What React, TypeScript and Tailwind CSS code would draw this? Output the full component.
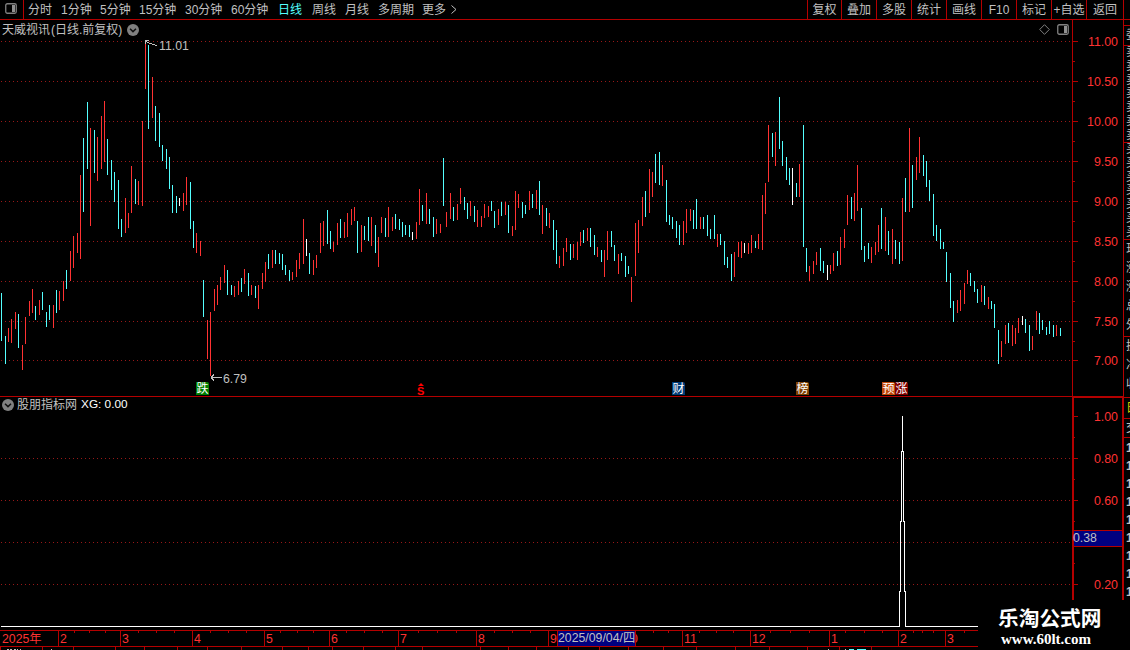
import clsx from "clsx"

type Bar = [x: number, top: number, bottom: number]

const UP: Bar[] = [
	[8, 328, 342], [11, 319, 343], [15, 312, 329], [22, 345, 370], [25, 317, 344], [29, 301, 316], [32, 289, 313],
	[39, 300, 315], [53, 305, 328], [59, 291, 310], [63, 281, 301], [70, 251, 281], [73, 236, 268], [77, 233, 253],
	[80, 175, 259], [90, 128, 226], [97, 137, 181], [101, 116, 169], [104, 101, 162], [125, 198, 233], [128, 213, 228],
	[131, 166, 213], [138, 181, 205], [142, 121, 206], [145, 41, 89], [152, 77, 118], [183, 193, 211], [186, 177, 205],
	[196, 233, 253], [200, 241, 256], [207, 320, 359], [210, 312, 376], [214, 289, 311], [217, 285, 305], [220, 277, 290],
	[224, 265, 283], [234, 286, 297], [238, 281, 295], [244, 269, 284], [251, 285, 295], [258, 285, 309], [262, 273, 289],
	[265, 262, 282], [272, 250, 268], [292, 272, 280], [296, 260, 277], [299, 253, 269], [303, 219, 264], [313, 260, 275],
	[316, 255, 268], [320, 223, 253], [323, 221, 246], [333, 242, 252], [337, 223, 245], [344, 222, 238], [347, 213, 237],
	[351, 209, 225], [354, 207, 221], [361, 225, 252], [371, 217, 246], [378, 237, 267], [381, 217, 233], [388, 207, 237],
	[392, 217, 231], [416, 222, 239], [419, 189, 225], [426, 193, 224], [436, 219, 234], [440, 224, 233], [446, 212, 227],
	[450, 193, 219], [457, 204, 220], [460, 188, 204], [470, 201, 216], [477, 210, 227], [481, 216, 227], [484, 204, 218],
	[488, 206, 217], [498, 209, 225], [505, 202, 215], [512, 226, 236], [515, 191, 230], [518, 194, 208], [529, 191, 210],
	[536, 190, 209], [542, 205, 234], [549, 213, 228], [559, 256, 268], [563, 248, 266], [566, 238, 252], [573, 244, 258],
	[577, 242, 260], [580, 232, 246], [587, 228, 241], [597, 247, 257], [604, 250, 277], [607, 231, 260], [618, 254, 274],
	[631, 277, 302], [635, 223, 276], [638, 220, 253], [642, 197, 226], [649, 169, 213], [652, 172, 197], [662, 165, 186],
	[683, 221, 245], [686, 209, 233], [690, 209, 221], [700, 217, 229], [717, 234, 247], [734, 252, 277], [738, 242, 257],
	[741, 241, 258], [748, 243, 254], [751, 235, 253], [758, 234, 249], [762, 195, 250], [765, 183, 214], [768, 125, 182],
	[775, 132, 166], [799, 164, 197], [809, 266, 281], [813, 261, 274], [816, 252, 265], [830, 265, 274], [833, 253, 271],
	[840, 237, 265], [844, 229, 248], [847, 195, 225], [854, 193, 221], [857, 165, 211], [871, 247, 263], [875, 242, 255],
	[878, 225, 252], [885, 217, 251], [892, 229, 264], [902, 198, 261], [909, 128, 212], [916, 157, 180], [919, 137, 173],
	[957, 300, 313], [960, 290, 311], [964, 283, 304], [967, 270, 284], [981, 285, 302], [988, 297, 309], [1001, 341, 357],
	[1005, 325, 344], [1012, 325, 346], [1015, 328, 344], [1018, 318, 333], [1032, 336, 350], [1036, 311, 330],
	[1056, 325, 336],
]

const DOWN: Bar[] = [
	[1, 293, 341], [5, 336, 364], [18, 314, 348], [35, 306, 320], [42, 292, 310], [46, 312, 327], [49, 305, 320],
	[56, 290, 313], [66, 270, 289], [83, 138, 212], [87, 102, 169], [94, 130, 173], [107, 139, 175], [111, 160, 190],
	[114, 172, 202], [118, 180, 229], [121, 219, 237], [135, 179, 204], [148, 45, 129], [155, 106, 141], [159, 113, 147],
	[162, 145, 161], [166, 149, 169], [169, 157, 189], [172, 185, 213], [176, 196, 213], [190, 182, 229], [193, 221, 248],
	[203, 280, 317], [227, 270, 295], [231, 285, 295], [241, 278, 292], [248, 273, 296], [255, 286, 298], [268, 254, 269],
	[275, 250, 264], [279, 253, 264], [282, 254, 270], [285, 265, 275], [289, 270, 281], [309, 253, 274], [327, 210, 244],
	[330, 231, 249], [340, 219, 238], [357, 221, 253], [364, 226, 240], [368, 217, 241], [375, 225, 253], [385, 218, 237],
	[395, 214, 229], [399, 219, 230], [402, 222, 237], [405, 225, 235], [409, 225, 237], [422, 205, 221], [429, 209, 224],
	[433, 217, 237], [443, 158, 206], [453, 207, 221], [464, 197, 210], [467, 203, 219], [474, 206, 222], [491, 201, 211],
	[494, 211, 228], [501, 202, 216], [508, 205, 233], [522, 202, 218], [525, 205, 214], [532, 194, 208], [539, 181, 215],
	[546, 208, 226], [553, 220, 250], [556, 230, 264], [570, 244, 260], [583, 230, 243], [590, 228, 247], [594, 235, 255],
	[601, 250, 262], [611, 231, 247], [614, 245, 261], [621, 253, 261], [625, 256, 277], [628, 266, 274], [645, 191, 217],
	[655, 154, 183], [659, 152, 185], [666, 180, 222], [669, 215, 225], [672, 217, 229], [676, 221, 238], [679, 225, 245],
	[693, 210, 229], [696, 199, 229], [703, 217, 229], [707, 215, 236], [710, 229, 239], [714, 215, 239], [720, 234, 245],
	[724, 241, 265], [727, 257, 268], [731, 254, 281], [755, 241, 248], [772, 133, 157], [779, 97, 149], [782, 141, 166],
	[786, 157, 180], [789, 168, 185], [796, 183, 197], [803, 125, 247], [806, 248, 272], [820, 248, 271], [823, 261, 273],
	[837, 251, 266], [851, 197, 219], [861, 208, 250], [864, 246, 262], [868, 243, 259], [881, 208, 249], [888, 231, 255],
	[895, 240, 259], [899, 242, 264], [905, 178, 212], [912, 165, 208], [923, 155, 176], [926, 161, 187], [929, 180, 201],
	[933, 194, 236], [936, 225, 241], [940, 229, 249], [943, 242, 249], [946, 252, 282], [950, 273, 308], [953, 301, 322],
	[970, 273, 286], [974, 281, 292], [977, 289, 303], [984, 286, 305], [991, 301, 309], [994, 304, 328], [998, 330, 364],
	[1008, 323, 343], [1025, 319, 333], [1029, 325, 351], [1039, 313, 334], [1042, 320, 330], [1046, 327, 335],
	[1049, 321, 334], [1053, 325, 337], [1060, 328, 336],
]

const FLAT: Bar[] = [
	[179, 198, 206], [306, 239, 256], [412, 232, 240], [744, 243, 253], [792, 168, 205], [827, 265, 280], [1022, 316, 325],
]

const PERIODS = [
	{ name: "分时", width: "w-[33px]" },
	{ name: "1分钟", width: "w-[39px]" },
	{ name: "5分钟", width: "w-[39px]" },
	{ name: "15分钟", width: "w-[46px]" },
	{ name: "30分钟", width: "w-[46px]" },
	{ name: "60分钟", width: "w-[47px]" },
	{ name: "日线", width: "w-[34px]", active: true },
	{ name: "周线", width: "w-[33px]" },
	{ name: "月线", width: "w-[33px]" },
	{ name: "多周期", width: "w-[44px]" },
	{ name: "更多", width: "w-[29px]" },
]

const TOOLS = ["复权", "叠加", "多股", "统计", "画线", "F10", "标记", "+自选", "返回"]

const PRICES = ["11.00", "10.50", "10.00", "9.50", "9.00", "8.50", "8.00", "7.50", "7.00"]

const MONTHS = [
	{ name: "2025年", width: "w-[58px]" },
	{ name: "2", width: "w-[62px]" },
	{ name: "3", width: "w-[72px]" },
	{ name: "4", width: "w-[72px]" },
	{ name: "5", width: "w-[65px]" },
	{ name: "6", width: "w-[69px]" },
	{ name: "7", width: "w-[78px]" },
	{ name: "8", width: "w-[72px]" },
	{ name: "9", width: "w-[81px]" },
	{ name: "0", width: "w-[53px]" },
	{ name: "11", width: "w-[68px]" },
	{ name: "12", width: "w-[79px]" },
	{ name: "1", width: "w-[69px]" },
	{ name: "2", width: "w-[47px]" },
	{ name: "3", width: "w-[33px]" },
]

const WEEK_TICKS = [
	74, 89, 105, 138, 156, 174, 210, 228, 246, 280, 297, 313, 346, 364, 382, 418, 437, 456, 494, 512, 530, 653, 668, 699,
	716, 733, 770, 790, 809, 845, 864, 882, 913, 922, 933, 964,
]

const FOOT_TICKS = [
	0, 42, 73, 115, 144, 177, 207, 241, 282, 308, 332, 363, 395, 422, 480, 508, 536, 568, 599, 628, 663, 696, 735, 769,
	807, 839, 871,
]

const BADGES = [
	{ name: "跌", style: "left-[196px] bg-[#008000]" },
	{ name: "财", style: "left-[672px] bg-[#003c78]" },
	{ name: "榜", style: "left-[796px] bg-[#804000]" },
	{ name: "预", style: "left-[882px] bg-[#c04808]" },
	{ name: "涨", style: "left-[895px] bg-[#800000]" },
]

// quote panel that runs past the right edge of the window
const QUOTE_ROWS = [
	{ labels: ["委"], style: "h-5 leading-[18px]" },
	{ labels: ["卖", "卖", "卖", "卖", "卖", "卖", "卖"], style: "h-[97px] leading-[13.8px]" },
	{ labels: ["买", "买", "买", "买", "买", "买", "买"], style: "h-[97px] leading-[13.8px]" },
	{ labels: ["现", "涨", "涨", "总", "外"], style: "h-[97px] leading-[19px]" },
	{ labels: ["换", "净", "收"], style: "h-[61px] leading-[19px]" },
	{ labels: ["日"], style: "h-[21px] leading-5 text-[#d0d000]" },
	{ labels: ["交"], style: "h-[19px] leading-[18px]" },
]

function Bars({ data, color }: { data: Bar[]; color: string }) {
	return (
		<g fill={color}>
			{data.map(([x, top, bottom]) => (
				<rect key={x} x={x} y={top} width="1" height={bottom - top} />
			))}
		</g>
	)
}

function DottedLine({ y }: { y: number }) {
	return <line x1="1" x2="1071" y1={y + 0.5} y2={y + 0.5} stroke="#981818" strokeDasharray="1 3" />
}

function CollapseIcon() {
	return (
		<svg className="h-3 w-3 flex-none" viewBox="0 0 12 12">
			<circle cx="6" cy="6" r="6" fill="#808080" />
			<path d="M3 4.8 6 7.6 9 4.8" fill="none" stroke="#101010" strokeWidth="1.5" />
		</svg>
	)
}

function PanelIcon() {
	return (
		<svg className="h-[11px] w-3 flex-none" viewBox="0 0 12 11">
			<rect x=".75" y=".75" width="10.5" height="9.5" rx="1.5" fill="none" stroke="#808080" strokeWidth="1.3" />
			<rect x="7" y="2" width="3" height="7" fill="#909090" />
		</svg>
	)
}

function Toolbar() {
	return (
		<div className="flex h-5 flex-none border-b border-[#b40000]">
			<div className="flex w-6 flex-none items-start border-r border-[#b40000] pt-[3px] pl-[5px]">
				<PanelIcon />
			</div>
			<div className="flex w-[783px] flex-none items-center pl-1">
				{PERIODS.map((period) => (
					<span key={period.name} className={clsx("flex-none", period.width, period.active && "text-[#54ffff]")}>
						{period.name}
					</span>
				))}
				<svg className="h-[9px] w-[6px]" viewBox="0 0 6 9">
					<path d="M.5.5 5 4.5.5 8.5" fill="none" stroke="#c0c0c0" />
				</svg>
			</div>
			{TOOLS.map((tool, i) => (
				<div
					key={tool}
					className={clsx(
						"flex flex-none items-center justify-center border-l border-[#b40000]",
						i === 0 ? "w-[34px]" : i === 8 ? "w-[37px]" : "w-[35px]",
					)}
				>
					{tool}
				</div>
			))}
			<div className="flex-1 border-l border-[#b40000]" />
		</div>
	)
}

function PriceChart() {
	return (
		<div className="relative h-[376px] w-[1072px] flex-none">
			<svg className="block h-[376px] w-[1072px]" viewBox="0 20 1072 376" shapeRendering="crispEdges">
				{[41, 81, 121, 161, 201, 241, 281, 321, 360].map((y) => (
					<DottedLine key={y} y={y} />
				))}
				<Bars data={UP} color="#ff3232" />
				<Bars data={DOWN} color="#54ffff" />
				<Bars data={FLAT} color="#ffffff" />
				<path
					d="M145.5 44V40.5H149M146 41.5 150 43.5 157 45.5M210.5 377.5H222M211 377.5 214 374.5M211 377.5 214 380.5"
					fill="none"
					stroke="#c0c0c0"
				/>
			</svg>
			<div className="absolute inset-x-0 top-0 flex h-[19px] items-center justify-between pr-[3px] pl-[2px]">
				<div className="flex items-center gap-[5px]">
					<span>
						天威视讯<span className="pl-px">(</span>日线.前复权<span>)</span>
					</span>
					<CollapseIcon />
				</div>
				<div className="flex items-center gap-[7px]">
					<svg className="h-[11px] w-[11px]" viewBox="0 0 11 11">
						<path d="M5.5.7 10.3 5.5 5.5 10.3.7 5.5Z" fill="none" stroke="#808080" />
					</svg>
					<PanelIcon />
				</div>
			</div>
			<span className="absolute top-[18px] left-[159px] text-[12.3px] leading-4">11.01</span>
			<span className="absolute top-[351px] left-[223px] text-[12.3px] leading-4">6.79</span>
			{BADGES.map((badge) => (
				<span
					key={badge.name}
					className={clsx(
						"absolute top-[362px] flex h-[13px] w-[13px] items-center justify-center rounded-tr-[2px] text-[12px] leading-none text-white",
						badge.style,
					)}
				>
					{badge.name}
				</span>
			))}
			<span className="absolute top-[365px] left-[417px] text-[11px] leading-3 font-bold text-[#ff0000]">S</span>
			<svg className="absolute top-[363px] left-[418px] h-[3px] w-[6px]" viewBox="0 0 6 3">
				<path d="M0 3 3 0 6 3Z" fill="#ff0000" />
			</svg>
		</div>
	)
}

function PriceAxis() {
	return (
		<div className="flex h-[376px] w-[51px] flex-none border-l border-[#b40000] text-[#ff3232]">
			<svg className="h-[376px] w-[6px] flex-none" viewBox="1073 20 6 376" shapeRendering="crispEdges">
				<g fill="#b40000">
					{[41, 81, 121, 161, 201, 241, 281, 321, 360].map((y) => (
						<rect key={y} x="1073" y={y} width="5" height="1" />
					))}
					{[61, 101, 141, 181, 221, 261, 301, 341].map((y) => (
						<rect key={y} x="1073" y={y} width="2" height="1" />
					))}
				</g>
			</svg>
			<div className="flex-1 pt-[2px] pr-[5px] text-right text-[12.4px]">
				{PRICES.map((price) => (
					<div key={price} className="h-10 leading-10 last:leading-[38px]">
						{price}
					</div>
				))}
			</div>
		</div>
	)
}

function SignalChart() {
	return (
		<div className="relative h-[233px] w-[1072px] flex-none">
			<svg className="block h-[233px] w-[1072px]" viewBox="0 397 1072 233" shapeRendering="crispEdges">
				{[458, 500, 542, 584].map((y) => (
					<DottedLine key={y} y={y} />
				))}
				<path
					d="M1 626.5H899.5V591.5H900.5V521.5H901.5V451.5H902.5V416M902.5 451.5H903.5V521.5H904.5V591.5H905.5V626.5H978"
					fill="none"
					stroke="#ffffff"
				/>
			</svg>
			<div className="absolute top-0 left-[2px] flex h-4 items-center gap-[4px]">
				<CollapseIcon />
				<span className="-ml-px">股朋指标网</span>
				<span className="text-[11.8px] text-white">XG: 0.00</span>
			</div>
		</div>
	)
}

function SignalAxis() {
	return (
		<div className="relative flex h-[233px] w-[52px] flex-none border-x-2 border-t border-[#b40000] text-[#ff3232]">
			<svg className="h-[232px] w-[5px] flex-none" viewBox="1074 398 5 232" shapeRendering="crispEdges">
				<g fill="#b40000">
					{[416, 458, 500, 584].map((y) => (
						<rect key={y} x="1074" y={y} width="4" height="1" />
					))}
					{[437, 479, 521, 563].map((y) => (
						<rect key={y} x="1074" y={y} width="1" height="1" />
					))}
				</g>
			</svg>
			<div className="flex-1 pr-[4px] text-right text-[12.4px] leading-[38px]">
				<div className="h-[42px]">1.00</div>
				<div className="h-[42px]">0.80</div>
				<div className="h-[42px]">0.60</div>
				<div className="h-[42px]" />
				<div className="h-[42px]">0.20</div>
			</div>
			<div className="absolute top-[132px] left-0 h-[17px] w-12 border-y border-[#b40000] bg-[#000080] text-[12.3px] leading-[15px] text-[#c0c0c0]">
				<span className="-ml-px">0.38</span>
			</div>
		</div>
	)
}

function SideStrip() {
	return (
		<div className="flex h-[610px] w-[6px] flex-none flex-col overflow-hidden text-[12px]">
			<div className="h-[6px] flex-none border-b border-[#b40000]" />
			{QUOTE_ROWS.map((row, i) => (
				<div key={i} className={clsx("flex-none border-b border-[#b40000] pl-[2px]", row.style)}>
					{row.labels.map((label, j) => (
						<div key={j}>{label}</div>
					))}
				</div>
			))}
			<div className="pt-px pl-[2px] leading-[18px] font-bold">
				{Array.from({ length: 9 }, (_, i) => (
					<div key={i}>1</div>
				))}
			</div>
		</div>
	)
}

function DateAxis() {
	return (
		<div className="relative h-5 w-[978px] flex-none">
			<div className="flex h-[17px] border-y border-[#b40000] text-[12.3px] leading-4 text-[#ff3232]">
				{MONTHS.map((month, i) => (
					<div key={i} className={clsx("flex-none", month.width, i > 0 ? "border-l border-[#b40000] pl-px" : "pl-[2px]")}>
						{month.name}
					</div>
				))}
			</div>
			<svg className="absolute inset-0 h-5 w-[978px]" viewBox="0 630 978 20" shapeRendering="crispEdges">
				<g fill="#b40000">
					{WEEK_TICKS.map((x) => (
						<rect key={x} x={x} y="631" width="1" height="2" />
					))}
					{FOOT_TICKS.map((x) => (
						<rect key={x} x={x} y="647" width="1" height="3" />
					))}
				</g>
				<path d="M7 649.5H9M10 649.5H12M14 649.5H16M17 649.5H18M20 649.5H21M51 649.5H52M828 649.5H829M845 649.5H846" stroke="#c0c0c0" />
				<path d="M849 649.5H854M857 649.5H866" stroke="#54ffff" />
			</svg>
			<div className="absolute top-[1px] left-[557px] h-[15px] w-[79px] border-x border-[#b40000] bg-[#000080] text-[12.3px] leading-[14px] whitespace-nowrap text-[#c0c0c0]">
				2025/09/04/四
			</div>
		</div>
	)
}

function SiteMark() {
	return (
		<div className="absolute top-[600px] left-[978px] flex h-[50px] w-[152px] flex-col bg-black pl-5 text-white">
			<span className="h-[30px] pt-1 text-[20.7px] leading-[30px] font-bold">乐淘公式网</span>
			<span className="pl-[3px] font-['Liberation_Serif',serif] text-[15px] leading-[18px] font-bold">www.60lt.com</span>
		</div>
	)
}

export default function App() {
	return (
		<div className="relative flex h-[650px] w-[1130px] flex-col overflow-hidden bg-black font-['Liberation_Sans','Noto_Sans_CJK_SC',sans-serif] text-[12px] text-[#c0c0c0]">
			<Toolbar />
			<div className="flex">
				<div className="flex w-[1124px] flex-none flex-col">
					<div className="flex border-b border-[#b40000]">
						<PriceChart />
						<PriceAxis />
						<div className="w-px bg-[#b40000]" />
					</div>
					<div className="flex">
						<SignalChart />
						<SignalAxis />
					</div>
					<DateAxis />
				</div>
				<SideStrip />
			</div>
			<SiteMark />
		</div>
	)
}
